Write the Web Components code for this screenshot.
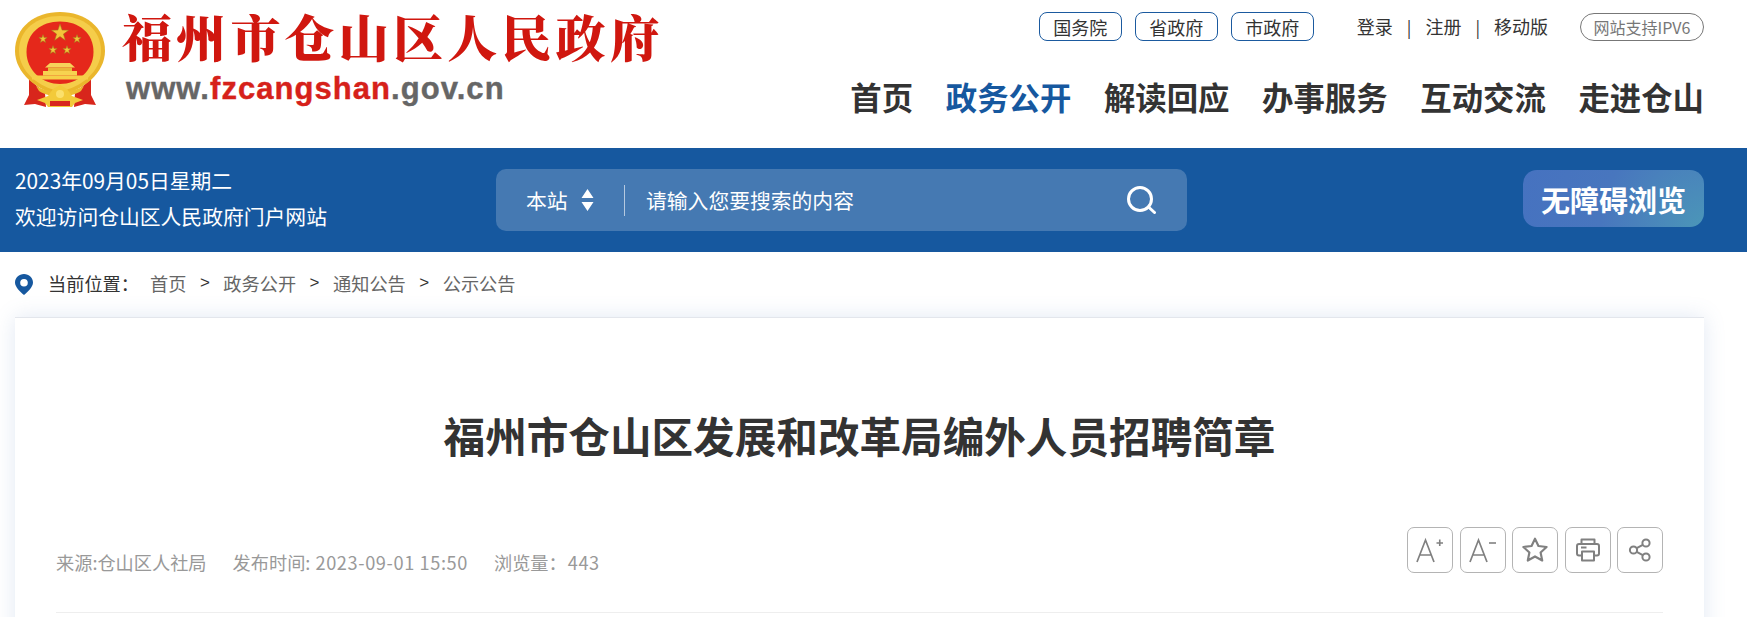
<!DOCTYPE html>
<html lang="zh-CN">
<head>
<meta charset="utf-8">
<title>福州市仓山区发展和改革局编外人员招聘简章</title>
<style>
  html, body { margin: 0; padding: 0; background: #fff; }
  body {
    height: 617px;
    overflow: hidden;
    font-family: "Noto Sans CJK SC", "Liberation Sans", sans-serif;
  }
</style>
</head>
<body>
<site-header></site-header>
<search-band></search-band>
<crumb-nav></crumb-nav>
<article-card></article-card>

<script>
// base class: every element just renders getTemplate() in an open shadow root
class BaseEl extends HTMLElement {
  constructor() {
    super();
    this.attachShadow({ mode: "open" });
  }
  getTemplate() {
    const template = document.createElement("template");
    template.innerHTML = `<style>${this.getStyle()}</style>${this.getMarkup()}`;
    return template;
  }
  connectedCallback() {
    this.shadowRoot.appendChild(this.getTemplate().content.cloneNode(true));
  }
}

class GovEmblem extends BaseEl {
  getStyle() {
    return `:host { display: block; width: 92px; height: 98px; }
      svg { display: block; filter: blur(.35px); }`;
  }
  getMarkup() {
    const star = (x, y, r) => {
      let pts = [];
      for (let i = 0; i < 10; i++) {
        const a = -Math.PI / 2 + i * Math.PI / 5;
        const rad = i % 2 ? r * 0.4 : r;
        pts.push((x + rad * Math.cos(a)).toFixed(1) + "," + (y + rad * Math.sin(a)).toFixed(1));
      }
      return `<polygon points="${pts.join(" ")}" fill="#f3c53a" stroke="#9a7a1c" stroke-width=".5"/>`;
    };
    return `<svg width="92" height="98" viewBox="0 0 92 98">
      <path d="M14 68 L30 82 L31 96 L20 93 L9 94 L14 84 Z" fill="#d8261c"/>
      <path d="M76 68 L60 82 L59 96 L70 93 L81 94 L76 84 Z" fill="#d8261c"/>
      <path d="M45 84 C22 80 0 62 0 40 C0 16 20 1 45 1 C70 1 90 16 90 40 C90 62 68 80 45 84 Z" fill="#eab62c"/>
      <path d="M45 80 C24 77 4 60 4 40 C4 18 22 5 45 5 C68 5 86 18 86 40 C86 60 66 77 45 80 Z" fill="#f5cd4a"/>
      <path d="M45 73 C28 73 11.500 60 11.500 41 C11.500 22 26 10.500 45 10.500 C64 10.500 78.500 22 78.500 41 C78.500 60 62 73 45 73 Z" fill="#e5281b"/>
      ${star(45, 22, 9)}${star(28, 28, 4.4)}${star(62, 28, 4.4)}${star(38, 39, 4.4)}${star(52, 39, 4.4)}
      <path d="M35 52 H55 L60 56.500 H30 Z" fill="#f6d25a"/>
      <rect x="33" y="56.500" width="24" height="3.500" fill="#e9b93a"/>
      <rect x="28" y="60" width="34" height="4.500" fill="#f7d250"/>
      <rect x="17" y="64.500" width="56" height="4" fill="#f6cf48"/>
      <path d="M21 75 C32 82 58 82 69 75 L66 80 C56 87 34 87 24 80 Z" fill="#edbb30"/>
      <path d="M22 89 L33 85 L38 78 L45 74 L52 78 L57 85 L68 89 L60 92 L57 96 L33 96 L30 92 Z" fill="#f3ca3a"/>
      <path d="M35 90 H55 V95 H35 Z" fill="#d8261c"/>
      <circle cx="45" cy="83" r="4" fill="#fbe06c"/>
    </svg>`;
  }
}

class SiteLogo extends BaseEl {
  getStyle() {
    return `:host { display: flex; align-items: flex-start; gap: 15px; padding-top: 11px; }
      .words { display: flex; flex-direction: column; }
      .name {
        font: 900 50px/54px "Liberation Serif", "Noto Serif CJK SC", "Noto Sans CJK SC", serif;
        letter-spacing: 4.200px;
        color: #d0170f;
        margin-top: 2px;
        white-space: nowrap;
      }
      .url {
        font: 700 31px/36px "Liberation Sans", sans-serif;
        letter-spacing: 1.050px;
        -webkit-text-stroke: .4px currentColor;
        color: #666;
        margin: 4px 0 0 4px;
        white-space: nowrap;
      }
      .url b { font-weight: 700; color: #d6211a; }`;
  }
  getMarkup() {
    return `<gov-emblem></gov-emblem>
      <div class="words">
        <div class="name">福州市仓山区人民政府</div>
        <div class="url">www.<b>fzcangshan</b>.gov.cn</div>
      </div>`;
  }
}

class TopLinks extends BaseEl {
  getStyle() {
    return `:host { display: flex; align-items: center; font-size: 18px; color: #333; white-space: nowrap; }
      .pills { display: flex; gap: 13px; margin-right: 43px; }
      .pill {
        height: 26px; width: 81px;
        border: 1px solid #1b5a9f; border-radius: 8px;
        display: flex; align-items: center; justify-content: center;
        line-height: 26px; padding-top: 1px; margin-top: -1px;
      }
      .user { display: flex; gap: 14px; align-items: center; margin-right: 32px; margin-top: -2px; }
      .sep { font-size: 17px; color: #333; }
      .v6 {
        height: 26px; width: 122px;
        border: 1px solid #777; border-radius: 14px;
        display: flex; align-items: center; justify-content: center;
        font-size: 16px; color: #777; margin-top: -1px;
      }`;
  }
  getMarkup() {
    return `<div class="pills">
        <span class="pill">国务院</span><span class="pill">省政府</span><span class="pill">市政府</span>
      </div>
      <div class="user">
        <span>登录</span><span class="sep">|</span><span>注册</span><span class="sep">|</span><span>移动版</span>
      </div>
      <span class="v6">网站支持IPV6</span>`;
  }
}

class MainNav extends BaseEl {
  getStyle() {
    return `:host { display: flex; gap: 32.600px; font-size: 31.400px; line-height: 40px; font-weight: 700; color: #333; white-space: nowrap; }
      .on { color: #16589f; }`;
  }
  getMarkup() {
    return `<span>首页</span><span class="on">政务公开</span><span>解读回应</span><span>办事服务</span><span>互动交流</span><span>走进仓山</span>`;
  }
}

class SiteHeader extends BaseEl {
  getStyle() {
    return `:host { display: flex; justify-content: space-between; height: 148px; padding: 0 43px 0 15px; box-sizing: border-box; }
      .right { display: flex; flex-direction: column; align-items: flex-end; padding-top: 13px; gap: 36px; }`;
  }
  getMarkup() {
    return `<site-logo></site-logo>
      <div class="right"><top-links></top-links><main-nav></main-nav></div>`;
  }
}

class SearchBand extends BaseEl {
  getStyle() {
    return `:host { display: flex; align-items: center; height: 104px; background: #16589f; color: #fff; padding: 0 43px 0 15px; box-sizing: border-box; font-size: 20.8px; white-space: nowrap; }
      .hello { width: 481px; line-height: 36px; margin-top: -4px; }
      .box {
        width: 691px; height: 62px; border-radius: 10px;
        background: #4579b2;
        display: flex; align-items: center;
        padding: 0 31px 0 30px; box-sizing: border-box;
      }
      .scope { display: flex; align-items: center; gap: 13px; width: 98px; }
      .scope svg { display: block; }
      .line { width: 1px; height: 31px; background: #b5c9e0; margin-right: 21px; }
      .hint { flex: 1; }
      .go { display: block; }
      .btn {
        margin-left: auto; margin-top: -3px;
        width: 181px; height: 57px; border-radius: 14px;
        background: radial-gradient(circle at 100% 100%, #4b96b8 0, #4876be 55%, #4672c0 100%);
        display: flex; align-items: center; justify-content: center;
        font-size: 29px; font-weight: 700;
      }`;
  }
  getMarkup() {
    return `<div class="hello">2023年09月05日星期二<br>欢迎访问仓山区人民政府门户网站</div>
      <div class="box">
        <div class="scope"><span>本站</span>
          <svg width="13" height="22" viewBox="0 0 13 22"><path d="M6.500 0 L12.500 9 H.5 Z M.5 13 H12.500 L6.500 22 Z" fill="#fff"/></svg>
        </div>
        <div class="line"></div>
        <span class="hint">请输入您要搜索的内容</span>
        <svg class="go" width="29" height="28" viewBox="0 0 29 28" fill="none" stroke="#fff" stroke-width="3" stroke-linecap="round"><circle cx="13" cy="13" r="11.500"/><path d="M21.500 21 L27.500 26.500"/></svg>
      </div>
      <div class="btn">无障碍浏览</div>`;
  }
}

class CrumbNav extends BaseEl {
  getStyle() {
    return `:host { display: flex; align-items: center; height: 65px; padding: 0 15px 4px; box-sizing: border-box; font-size: 18.200px; color: #666; white-space: nowrap; }
      svg { display: block; margin: 4px 15px 0 0; }
      .here { color: #333; width: 102px; }
      .gt { color: #333; margin: 0 13.500px; font-size: 17px; font-family: "Liberation Sans", sans-serif; }`;
  }
  getMarkup() {
    return `<svg width="18" height="21" viewBox="0 0 18 21"><path fill-rule="evenodd" fill="#16589f" d="M9 0 C14 0 18 3.800 18 8.600 C18 13 13 18 9 21 C5 18 0 13 0 8.600 C0 3.800 4 0 9 0 Z M9 5 A3.800 3.800 0 1 0 9 12.600 A3.800 3.800 0 1 0 9 5 Z"/></svg>
      <span class="here">当前位置：</span>
      <span>首页</span><span class="gt">&gt;</span><span>政务公开</span><span class="gt">&gt;</span><span>通知公告</span><span class="gt">&gt;</span><span>公示公告</span>`;
  }
}

class ToolButton extends BaseEl {
  getStyle() {
    return `:host { display: flex; align-items: center; justify-content: center; width: 46px; height: 46px; box-sizing: border-box; border: 1px solid #b4b4b4; border-radius: 7px; color: #808080; }
      ::slotted(svg) { display: block; }`;
  }
  getMarkup() { return `<slot></slot>`; }
}

class ArticleCard extends BaseEl {
  getStyle() {
    return `:host { display: block; margin: 0 43px 0 15px; height: 400px; padding: 0 41px; box-sizing: border-box; background: #fff; box-shadow: 0 0 20px rgba(90,125,190,.18); border-top: 1px solid #e3e6ec; }
      h1 { margin: 0; padding-top: 88px; font-size: 41.600px; line-height: 58px; font-weight: 700; color: #333; text-align: center; white-space: nowrap; }
      .meta { display: flex; justify-content: space-between; align-items: flex-start; margin-top: 63px; padding-bottom: 37px; border-bottom: 1px solid #eee; font-size: 18.200px; color: #999; white-space: nowrap; }
      .info { display: flex; gap: 26px; padding-top: 22px; }
      .num { letter-spacing: .6px; margin-left: 1px; }
      .tools { display: flex; gap: 6.500px; }`;
  }
  getMarkup() {
    return `<h1>福州市仓山区发展和改革局编外人员招聘简章</h1>
      <div class="meta">
        <div class="info"><span>来源:仓山区人社局</span><span>发布时间: <span class="num">2023-09-01 15:50</span></span><span>浏览量：<span class="num">443</span></span></div>
        <div class="tools">
          <tool-button><svg width="32" height="32" viewBox="0 0 32 32" fill="none" stroke="#808080" stroke-width="1.700"><path d="M3 28 L11.500 6 L20 28 M6 21 H17"/><path d="M22.500 9 H29 M25.750 5.500 V12" stroke-width="1.600"/></svg></tool-button>
          <tool-button><svg width="32" height="32" viewBox="0 0 32 32" fill="none" stroke="#808080" stroke-width="1.700"><path d="M3 28 L11.500 6 L20 28 M6 21 H17"/><path d="M22 9 H29" stroke-width="1.600"/></svg></tool-button>
          <tool-button><svg width="28" height="28" viewBox="0 0 26 26" fill="none" stroke="#808080" stroke-width="2" stroke-linejoin="round"><path d="M13 2.500 L16.200 9.300 L23.800 10.200 L18.200 15.300 L19.700 22.800 L13 19 L6.300 22.800 L7.800 15.300 L2.200 10.200 L9.800 9.300 Z"/></svg></tool-button>
          <tool-button><svg width="26" height="26" viewBox="0 0 26 26" fill="none" stroke="#808080" stroke-width="2" stroke-linejoin="round"><path d="M6.500 7 V2.500 H19.500 V7"/><path d="M6.500 18.500 H4 Q2 18.500 2 16.500 V9 Q2 7 4 7 H22 Q24 7 24 9 V16.500 Q24 18.500 22 18.500 H19.500"/><path d="M7 14.500 H19 V23.500 H7 Z"/><path d="M6 10.500 H11.500"/></svg></tool-button>
          <tool-button><svg width="26" height="26" viewBox="0 0 26 26" fill="none" stroke="#808080" stroke-width="2"><circle cx="19" cy="6" r="3.600"/><circle cx="6.500" cy="13" r="3.600"/><circle cx="19" cy="20" r="3.600"/><path d="M9.700 11.200 L15.800 7.800 M9.700 14.800 L15.800 18.200"/></svg></tool-button>
        </div>
      </div>`;
  }
}

customElements.define("gov-emblem", GovEmblem);
customElements.define("site-logo", SiteLogo);
customElements.define("top-links", TopLinks);
customElements.define("main-nav", MainNav);
customElements.define("site-header", SiteHeader);
customElements.define("search-band", SearchBand);
customElements.define("crumb-nav", CrumbNav);
customElements.define("tool-button", ToolButton);
customElements.define("article-card", ArticleCard);
</script>
</body>
</html>
